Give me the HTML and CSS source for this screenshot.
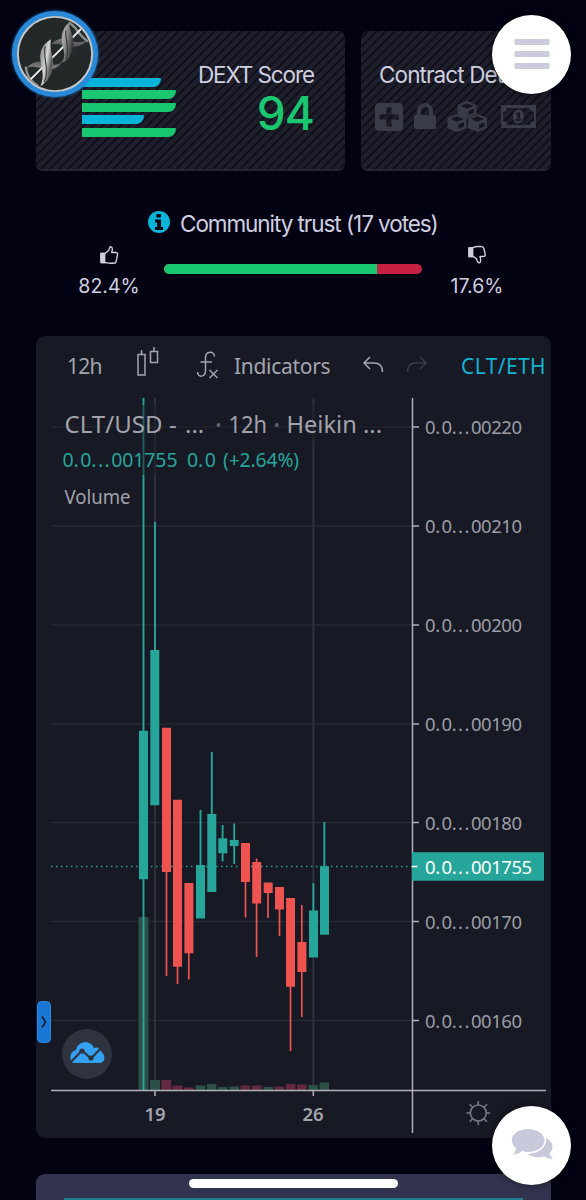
FILE: index.html
```html
<!DOCTYPE html>
<html lang="en">
<head>
<meta charset="utf-8">
<title>CLT/USD</title>
<link rel="stylesheet" href="styles.css">
</head>
<body>
<main class="page">
  <section class="cards">
    <div class="card score">
      <div class="bars"><i class="bar blue b1"></i><i class="bar"></i><i class="bar"></i><i class="bar blue b4"></i><i class="bar"></i></div>
      <div class="score-text"><span class="card-title">DEXT Score</span><strong class="score-value">94</strong></div>
    </div>
    <div class="card contract">
      <span class="card-title contract-title">Contract Details</span>
      <svg class="contract-icons" viewBox="374 100 166 34" width="166" height="34">
        <g fill="#3a3b48">
          <path fill-rule="evenodd" d="M379 103h20a4 4 0 0 1 4 4v20a4 4 0 0 1-4 4h-20a4 4 0 0 1-4-4v-20a4 4 0 0 1 4-4zM386.500 107.500v7h-7v5h7v7h5v-7h7v-5h-7v-7z"/>
          <path fill-rule="evenodd" d="M417 115v-4a8 8 0 0 1 16 0v4h1a2 2 0 0 1 2 2v10a2 2 0 0 1-2 2h-18a2 2 0 0 1-2-2v-10a2 2 0 0 1 2-2zm4 0h8v-4a4 4 0 0 0-8 0z"/>
          <path fill-rule="evenodd" d="M501 105h35v23h-35zM507 108a4 4 0 0 1-4 4v9a4 4 0 0 1 4 4h23a4 4 0 0 1 4-4v-9a4 4 0 0 1-4-4z"/>
          <path fill-rule="evenodd" d="M518.500 109.500c-3.500 0-5.500 3-5.500 7s2 7 5.500 7 5.500-3 5.500-7-2-7-5.500-7zM517.500 112h2.500v7h1.500v2h-6v-2h2v-4h-1.500v-1.500z"/>
          <path d="M457.500 105l9.500-4 9.500 4v9l-9.500 4-9.500-4zM447.500 118l9.500-4 9.500 4v10l-9.500 4-9.500-4zM468 118l9.500-4 9.500 4v10l-9.500 4-9.500-4z"/>
        </g>
        <path fill="#151622" d="M460.500 106l6.500-2.700 6.500 2.700-6.500 2.700zM468.500 111l5.500-2.400v4l-5.500 2.400zM450.500 119l6.500-2.700 6.500 2.700-6.500 2.700zM458.500 124.500l5.500-2.400v4.500l-5.500 2.400zM471 119l6.500-2.700 6.500 2.700-6.500 2.700zM479 124.500l5.500-2.400v4.500l-5.500 2.400z"/>
      </svg>
    </div>
  </section>

  <section class="trust">
    <h2 class="trust-title">
      <svg viewBox="0 0 24 24" width="24" height="24"><circle cx="12" cy="11" r="11" fill="#08b4d8"/><path fill="#020212" d="M9.500 3h4.500v3.500H9.500zM8 8.500h6v7.500h2v3H8v-3h2v-4.500H8z"/></svg>
      <span>Community trust (17 votes)</span>
    </h2>
    <div class="trust-row">
      <div class="vote up">
        <svg viewBox="0 0 20 20" width="20" height="20"><path d="M2 8.500h3.500v9H2zM5.500 9l4-3.500c1-1 .6-3.700 2.200-3.700 2.400.4 1.700 3.500.9 5.700h4.200c1.500 0 2.100 1.100 1.700 2.300l-1.300 6.500c-.3 1.400-1 2-2.400 2H11c-2 0-3.500-.8-5.500-.8" /><path class="solid" d="M2 8.500h3.500v9H2z"/></svg>
        <span>82.4%</span>
      </div>
      <div class="meter"><div class="meter-up" style="width:82.4%"></div></div>
      <div class="vote down">
        <svg viewBox="0 0 20 20" width="20" height="20"><path d="M2 3h3.500v8.500H2zM5.500 2.800C7.500 2 9 1.500 11 1.500h3c2 0 2.600.7 2.900 2l1.200 5.500c.4 1.500-.3 2.500-1.700 2.500h-3.400c.8 2.500 1.300 5.900-.8 6.300-2 .4-1.800-2.400-2.600-3.600C8.500 12.500 7 12.500 5.500 11"/><path class="solid" d="M2 3h3.500v8.500H2z"/></svg>
        <span>17.6%</span>
      </div>
    </div>
  </section>

  <section class="chart-panel">
    <div class="toolbar">
      <span class="interval">12h</span>
      <svg class="candle-icon" viewBox="0 0 24 34" width="24" height="34"><path d="M2 8.500h7v20.500H2zM5.500 4v4.500M14.500 5.500h7v11h-7zM18 1v4.500"/></svg>
      <svg class="fx-icon" viewBox="0 0 24 32" width="24" height="32"><path d="M18.500 6.500c0-6-9-5.500-9 1v13c0 7-8 7.500-8 1.500M4.500 12h11.500M13.500 20l8 8M21.500 20l-8 8"/></svg>
      <span class="indicators">Indicators</span>
      <svg class="undo" viewBox="0 0 22 20" width="22" height="20"><path d="M8 1L2 7l6 6M2 7h10c5 0 8.500 3 8.500 9"/></svg>
      <svg class="redo" viewBox="0 0 22 20" width="22" height="20"><path d="M14 1l6 6-6 6M20 7H10c-5 0-8.500 3-8.500 9"/></svg>
      <span class="pair">CLT/ETH</span>
    </div>
    <svg class="chart" viewBox="36 396 515 742" width="515" height="742">
      <g class="grid">
        <path d="M51 427H412M51 526H412M51 625H412M51 724H412M51 822.500H412M51 921.500H412M51 1020.500H412"/>
        <path class="vertical" d="M155 398V1090M313.300 398V1090"/>
      </g>
      <g class="vol-up">
        <path d="M138.500 917h10v173h-10zM150 1080h10v10h-10zM195.500 1085.500h10v4.500h-10zM207 1084h9.500v6H207zM218 1087h9.500v3H218zM229.500 1086.500h9.500v3.500h-9.500zM263.500 1087h9.500v3h-9.500zM308.500 1085h9.500v5h-9.500zM319.500 1082.500h9.500v7.500h-9.500z"/>
      </g>
      <g class="vol-down">
        <path d="M161.300 1080h10v10h-10zM172.500 1085.500h10v4.500h-10zM184 1087.500h9.500v2.500H184zM240.500 1085.500h9.500v4.500h-9.500zM252 1085.500h9.500v4.500H252zM274.500 1086.500h9.500v3.500h-9.500zM286 1084h9.500v6H286zM297 1084.500h9.500v5.500H297z"/>
      </g>
      <path class="price-line" d="M51 866.500H412"/>
      <g class="up">
        <path class="wick" d="M143.500 398V1090M155 522V655M200.500 810V870M211.800 752V820M222.600 825V861.500M234.200 823.500V864M313.400 883V915M324.300 822V870"/>
        <path d="M139 730.700h9v148.600h-9zM150.300 650h9v155.300h-9zM196 865h9v53.500h-9zM207.300 814h9v78h-9zM218.300 838.300h9v15h-9zM229.700 840h9v6h-9zM309 910.600h9v47h-9zM320 866.300h9v68.500h-9z"/>
      </g>
      <g class="down">
        <path class="wick" d="M166.500 870V976M177.500 960V984M188.800 950V979.500M245.500 880V917.500M256.600 858.500V957M268 890V918M279.500 905V936M290.500 980V1051M301.800 905V1017"/>
        <path d="M162 727.800h9v144.200h-9zM173 799.800h9v167h-9zM184.400 883h9v70.300h-9zM241 843h9v39h-9zM252.200 862h9v41.500h-9zM263.700 882.500h9v10.500h-9zM275 887h9v22.500h-9zM286 898h9v88.800h-9zM297.400 942h9v30h-9z"/>
      </g>
      <path class="axis" d="M412.500 398V1133M51 1090.500H546M155 1090V1096M313.300 1090V1096M412 427H419M412 526H419M412 625H419M412 724H419M412 822.500H419M412 921.500H419M412 1020.500H419"/>
      <g class="price">
        <text x="425" y="434">0<tspan>.</tspan>0<tspan>...</tspan>00220</text>
        <text x="425" y="533">0<tspan>.</tspan>0<tspan>...</tspan>00210</text>
        <text x="425" y="632">0<tspan>.</tspan>0<tspan>...</tspan>00200</text>
        <text x="425" y="731">0<tspan>.</tspan>0<tspan>...</tspan>00190</text>
        <text x="425" y="829.500">0<tspan>.</tspan>0<tspan>...</tspan>00180</text>
        <text x="425" y="928.500">0<tspan>.</tspan>0<tspan>...</tspan>00170</text>
        <text x="425" y="1027.500">0<tspan>.</tspan>0<tspan>...</tspan>00160</text>
      </g>
      <path fill="#26a69a" d="M412 852.300h132v28.500H412z"/>
      <path stroke="#fff" stroke-width="1.500" d="M412 866.500h5.500"/>
      <g class="price"><text class="current" x="425" y="873.500">0<tspan>.</tspan>0<tspan>...</tspan>001755</text></g>
      <g class="date"><text x="155" y="1120.500" text-anchor="middle">19</text><text x="313" y="1120.500" text-anchor="middle">26</text></g>
      <g class="legend">
        <path class="legend-shade" d="M60 405H386V441H302V475H60z"/>
        <text class="symbol" x="64.500" y="433" textLength="98" lengthAdjust="spacing">CLT/USD</text>
        <text class="symbol" x="169" y="433">-</text>
        <text class="symbol" x="185" y="433">...</text>
        <text class="symbol" x="228.500" y="433" textLength="38.500" lengthAdjust="spacingAndGlyphs">12h</text>
        <text class="symbol" x="286.500" y="433" textLength="95.500" lengthAdjust="spacingAndGlyphs">Heikin ...</text>
        <circle cx="218.500" cy="425" r="2"/><circle cx="276.800" cy="425" r="2"/>
        <text class="quote" x="62.500" y="466.500">0<tspan>.</tspan>0<tspan>...</tspan>001755</text>
        <text class="quote" x="187" y="466.500">0<tspan>.</tspan>0</text>
        <text class="quote" x="223" y="466.500" textLength="76" lengthAdjust="spacingAndGlyphs">(+2.64%)</text>
        <text class="volume" x="64.500" y="503.500" textLength="66" lengthAdjust="spacingAndGlyphs">Volume</text>
      </g>
      <rect x="37.500" y="1001.500" width="13" height="41" rx="4" fill="#1976d2" stroke="#2d8ae6"/>
      <path d="M42 1016.500l3.500 5.500-3.500 5.500" fill="none" stroke="#171924" stroke-width="1.500"/>
      <circle cx="87" cy="1054" r="25" fill="#2f323f"/>
      <path fill="#33a0f2" d="M73 1063a7.500 7.500 0 0 1 3-13c2-10 15-10 18-2l4-.500 4 5c4 4 3 10-2 10.500z"/>
      <path d="M70 1063l12-12.500 9 8L102 1047" fill="none" stroke="#2f323f" stroke-width="2"/>
      <circle cx="82" cy="1051" r="2.600" fill="#2f323f"/><circle cx="91" cy="1058" r="2.600" fill="#2f323f"/>
      <g fill="none" stroke="#777982" stroke-width="1.600"><circle cx="478.300" cy="1113" r="8"/><path d="M478.300 1105v-4M478.300 1121v4M470.300 1113h-4M486.300 1113h4M472.600 1107.300l-3-3M484 1107.300l3-3M472.600 1118.700l-3 3M484 1118.700l3 3"/></g>
    </svg>
  </section>

  <section class="next-panel"><div class="next-line"></div></section>
</main>

<svg class="token" viewBox="0 0 88 88" width="86" height="86">
  <defs>
    <linearGradient id="ribbon" x1="0" y1="0" x2="1" y2=".35"><stop offset="0" stop-color="#555"/><stop offset=".35" stop-color="#d6d6d6"/><stop offset=".5" stop-color="#555"/><stop offset=".7" stop-color="#aaa"/><stop offset="1" stop-color="#303332"/></linearGradient>
    <linearGradient id="band" x1="0" y1="0" x2="0" y2="1"><stop offset="0" stop-color="#777"/><stop offset=".5" stop-color="#333"/><stop offset="1" stop-color="#888"/></linearGradient>
    <clipPath id="disc"><circle cx="44" cy="44" r="37"/></clipPath>
  </defs>
  <circle cx="44" cy="44" r="38" fill="#222928" stroke="#c6c6c6" stroke-width="2"/>
  <g clip-path="url(#disc)">
    <path d="M40 34c9-9 15-5 22-3s11 1 15-2c-5 8-12 8-19 7s-12-3-18-2zM15 58c9-9 15-6 22-4s11 1 15-3c-5 9-12 9-19 8s-12-3-18-1z" fill="url(#band)"/>
    <path d="M58 12c8 3 10 14 20 19M14 57c1 9 4 14 13 20" fill="none" stroke="#8d8f8e" stroke-width="2.500"/>
    <path d="M19 70L71 18" stroke="#ededed" stroke-width="2"/>
    <path d="M59 11c-7 6-9 13-8 20 1 8 5 14 0 22 9-4 12-12 12-21 0-8-5-12-4-21zM40 29c-9 5-12 13-11 21 1 9 5 17 0 27 10-6 13-15 13-24 0-8-4-14-2-24z" fill="url(#ribbon)"/>
    <path d="M55 20c-1 11 5 17 0 30M34 36c-3 12 5 23-1 37" fill="none" stroke="#393c3b" stroke-width="1.200"/>
  </g>
</svg>
<div class="fab menu"><svg viewBox="0 0 36 30" width="36" height="30"><g fill="#cacbdb"><rect x=".5" width="35" height="6" rx="1"/><rect x=".5" y="12" width="35" height="6" rx="1"/><rect x=".5" y="24" width="35" height="6" rx="1"/></g></svg></div>
<div class="fab chat"><svg viewBox="0 0 42 34" width="42" height="34"><path fill="#c8cadb" d="M35 10c8 4 8 11 3.500 15 .5 2.500 2 4 3.500 5.500-3.500.5-6.500-.5-9-2-6 1.500-12.500.5-16-2.500 11-.5 19.500-7 18-16zM17 1c9 0 16.500 5 16.500 11.500S26 24 17 24c-2 0-4-.3-6-1-2.500 2-5.500 3.500-9 3.500 1.500-1.500 3-3.500 3.200-6C-4 13 2 1 17 1z"/></svg></div>
<div class="home-bar"></div>
</body>
</html>
```
FILE: styles.css
```css
* { box-sizing: border-box; }
body { margin: 0; height: 1200px; overflow: hidden; background: #020212; color: #cfcfe0; font-family: Inter, "Liberation Sans", sans-serif; }
.page { display: flex; flex-direction: column; height: 1200px; padding: 31px 35px 0 36px; overflow: hidden; }
.cards { display: grid; flex: none; grid-template-columns: 309px 190px; gap: 16px; }
.card { height: 140px; border-radius: 7px; border-bottom: 2px solid #242534; background: repeating-linear-gradient(135deg, #1e1f2a 0 3.600px, #0e0f1a 4.400px 5.600px, #1e1f2a 6.400px); }
.score { display: flex; justify-content: space-between; padding: 0 31px 0 46px; }
.bars { display: flex; flex-direction: column; gap: 3.200px; padding-top: 46.700px; }
.bar { width: 93.500px; height: 9.300px; border-radius: 0 1px 8px 0; background: #18c76f; }
.blue { background: #08b4d8; }
.b1 { width: 78.500px; }
.b4 { width: 62px; }
.score-text { display: flex; flex-direction: column; align-items: flex-end; padding-top: 30px; }
.card-title { font-size: 22.500px; line-height: 28px; letter-spacing: -1.100px; white-space: nowrap; }
.score-value { font-size: 46px; line-height: 48px; font-weight: 500; color: #18c76f; letter-spacing: -1px; }
.contract { display: flex; flex-direction: column; padding: 30px 0 0 13px; overflow: hidden; }
.contract-title { padding-left: 5px; letter-spacing: -.9px; }
.contract-icons { margin-top: 11px; }
.trust { display: flex; flex: none; flex-direction: column; height: 165px; padding-top: 38px; }
.trust-title { display: flex; align-items: center; gap: 9px; margin: 0 0 0 111px; height: 28px; font-size: 22.500px; font-weight: 400; letter-spacing: -1.060px; white-space: nowrap; }
.trust-row { display: flex; padding-left: 38px; margin-top: 8px; }
.vote { display: flex; flex-direction: column; align-items: center; width: 70px; font-size: 19.500px; line-height: 24px; gap: 9px; }
.vote svg { fill: none; stroke: #cfcfe0; stroke-width: 1.400; stroke-linejoin: round; }
.vote .solid { fill: #cfcfe0; }
.meter { width: 258px; height: 10px; margin: 19px 20px 0; border-radius: 5px; overflow: hidden; background: #c51f41; }
.meter-up { height: 100%; background: #18c76f; }
.chart-panel { height: 802px; flex: none; border-radius: 9px; background: #171924; overflow: hidden; }
.toolbar { display: flex; align-items: center; height: 60px; padding-left: 31px; color: #a4a5ae; font: 21px/28px "Noto Sans", sans-serif; }
.toolbar svg { fill: none; stroke: #a4a5ae; stroke-width: 1.500; flex: none; }
.interval { flex: none; width: 69px; letter-spacing: -.8px; }
.candle-icon { margin-bottom: 6px; }
.fx-icon { margin-left: 36px; }
.indicators { flex: none; width: 142px; padding-left: 14px; letter-spacing: -.3px; }
.toolbar .redo { margin-left: 22px; stroke: #3a3c47; }
.pair { margin-left: 33px; color: #12b4d2; white-space: nowrap; letter-spacing: .4px; }
.chart { display: block; font-family: "Noto Sans", sans-serif; }
.grid { stroke: #272934; stroke-width: 1.500; }
.vertical { stroke: #2e303b; stroke-width: 2; }
.vol-up { fill: #2a5048; }
.vol-down { fill: #642940; }
.price-line { stroke: #26a69a; stroke-width: 1.500; stroke-dasharray: 1.500 3.500; }
.up { fill: #26a69a; }
.up .wick { stroke: #26a69a; stroke-width: 1.900; }
.down { fill: #ef5350; }
.down .wick { stroke: #ef5350; stroke-width: 1.700; }
.axis { stroke: #b0b1b9; stroke-width: 1.500; }
.price { fill: #9c9da6; font-size: 18.500px; letter-spacing: -.450px; }
.price tspan { letter-spacing: 1.450px; }
.price .current { fill: #fff; }
.date { fill: #a2a3ab; font-size: 18.500px; font-weight: 600; }
.legend { fill: #a2a3ab; }
.legend circle { fill: #62646e; }
.legend-shade { fill: #171924; opacity: .5; }
.symbol { font-size: 24px; }
.legend .quote { font-size: 19.500px; fill: #26a69a; letter-spacing: -.100px; }
.quote tspan { letter-spacing: 1.400px; }
.volume { font-size: 20px; }
.next-panel { flex: none; height: 60px; margin-top: 36px; padding: 24px 28px 0; border-radius: 9px; background: #32344f; }
.next-line { height: 3px; background: #217b91; }
.token { position: absolute; left: 12px; top: 11px; border-radius: 50%; background: #2989d9; box-shadow: 0 0 3px #2380d0; }
.fab { position: absolute; left: 492px; display: flex; align-items: center; justify-content: center; width: 79px; height: 79px; border-radius: 50%; background: #fff; box-shadow: 0 0 8px #0008; }
.menu { top: 14.500px; }
.chat { top: 1105.500px; }
.home-bar { position: absolute; left: 188.500px; top: 1179px; width: 209px; height: 9px; border-radius: 5px; background: #fff; }
```
